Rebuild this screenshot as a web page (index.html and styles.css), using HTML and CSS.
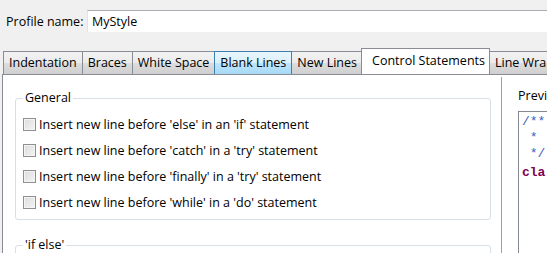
FILE: index.html
```html
<!DOCTYPE html>
<html lang="en">
<head>
    <meta charset="UTF-8">
    <title>Formatter Profile</title>
    <link rel="stylesheet" href="styles.css">
</head>
<body>
    <div class="profile-row">
        <label class="profile-label">Profile name:</label>
        <div class="profile-input">MyStyle</div>
    </div>

    <div class="tabbar">
        <div class="tab">Indentation</div>
        <div class="tab">Braces</div>
        <div class="tab">White Space</div>
        <div class="tab tab-hover">Blank Lines</div>
        <div class="tab">New Lines</div>
        <div class="tab tab-active">Control Statements</div>
        <div class="tab">Line Wrap</div>
    </div>

    <div class="panel">
        <div class="options">
            <fieldset class="group">
                <legend>General</legend>
                <div class="check-row"><span class="box"></span>Insert new line before 'else' in an 'if' statement</div>
                <div class="check-row"><span class="box"></span>Insert new line before 'catch' in a 'try' statement</div>
                <div class="check-row"><span class="box"></span>Insert new line before 'finally' in a 'try' statement</div>
                <div class="check-row"><span class="box"></span>Insert new line before 'while' in a 'do' statement</div>
            </fieldset>
            <fieldset class="group group-second">
                <legend>'if else'</legend>
            </fieldset>
        </div>
        <div class="preview">
            <div class="preview-label">Previ</div>
            <div class="preview-box">
                <div class="code-line doc">/**</div>
                <div class="code-line doc">&nbsp;*</div>
                <div class="code-line doc">&nbsp;*/</div>
                <div class="code-line kw">cla</div>
            </div>
        </div>
    </div>
</body>
</html>
```

FILE: styles.css
```css
body {
    margin: 0;
    background: #f0f0f0;
    font-family: "Open Sans", "Noto Sans", sans-serif;
    font-size: 12.5px;
    color: #000;
    overflow: hidden;
    width: 547px;
    height: 253px;
}
.profile-row {
    display: flex;
    align-items: center;
    padding: 10px 0 0 6px;
    height: 22px;
}
.profile-label {
    width: 81px;
    flex: none;
}
.profile-input {
    flex: 1;
    height: 21px;
    line-height: 21px;
    background: #fff;
    border-top: 1px solid #abadb3;
    border-left: 1px solid #e2e3ea;
    padding-left: 4px;
    white-space: nowrap;
}
.tabbar {
    display: flex;
    align-items: flex-end;
    height: 26px;
    margin: 16px 0 0 3px;
    white-space: nowrap;
    overflow: hidden;
}
.tab {
    height: 22px;
    line-height: 21px;
    padding: 0 5px;
    border: 1px solid #898c95;
    border-bottom: none;
    margin-right: -1px;
    background: linear-gradient(#f2f2f2, #ebebeb 50%, #dddddd 51%, #cfcfcf);
    flex: none;
}
.tab-hover {
    border-color: #3c7fb1;
    background: linear-gradient(#eaf6fd, #d9f0fc 50%, #bee6fd 51%, #a7d9f5);
    position: relative;
    z-index: 1;
}
.tab-active {
    height: 26px;
    line-height: 24px;
    padding: 0 4px 0 10px;
    margin: 0 -1px -1px -1px;
    background: #fff;
    border-color: #898c95;
    position: relative;
    z-index: 2;
}
.panel {
    display: flex;
    height: 200px;
    margin-left: 2px;
    background: #fff;
    border-left: 1px solid #898c95;
    border-top: 1px solid #898c95;
}
.options {
    width: 499px;
    flex: none;
    padding: 13px 0 0 12px;
    box-sizing: border-box;
    border-right: 1px solid #a0a0a0;
    margin-top: 2px;
}
.group {
    width: 476px;
    box-sizing: border-box;
    margin: 0;
    padding: 5px 0 4px 7px;
    border: 1px solid #d5dfe5;
    border-radius: 3px;
}
.group legend {
    padding: 0 2px;
    margin-left: 0;
    line-height: 16px;
}
.group-second {
    margin-top: 17px;
    height: 40px;
}
.check-row {
    display: flex;
    align-items: center;
    height: 26px;
    white-space: nowrap;
}
.box {
    width: 11px;
    height: 11px;
    border: 1px solid #8e8f8f;
    background: linear-gradient(135deg, #dcdcdc, #f4f4f4);
    box-shadow: inset 0 0 0 1px #f4f4f4;
    margin-right: 3px;
    flex: none;
}
.preview {
    flex: 1;
    padding: 13px 0 0 16px;
    background: #fff;
}
.preview-label {
    height: 16px;
    line-height: 16px;
}
.preview-box {
    margin-top: 7px;
    height: 200px;
    border-left: 1px solid #828790;
    border-top: 1px solid #828790;
    padding: 2px 0 0 3px;
    font-family: "Liberation Mono", monospace;
    font-size: 13px;
    white-space: nowrap;
}
.code-line {
    height: 16px;
    line-height: 16px;
}
.doc {
    color: #3f5fbf;
}
.kw {
    color: #7f0055;
    font-weight: bold;
    margin-top: 3px;
}
```
